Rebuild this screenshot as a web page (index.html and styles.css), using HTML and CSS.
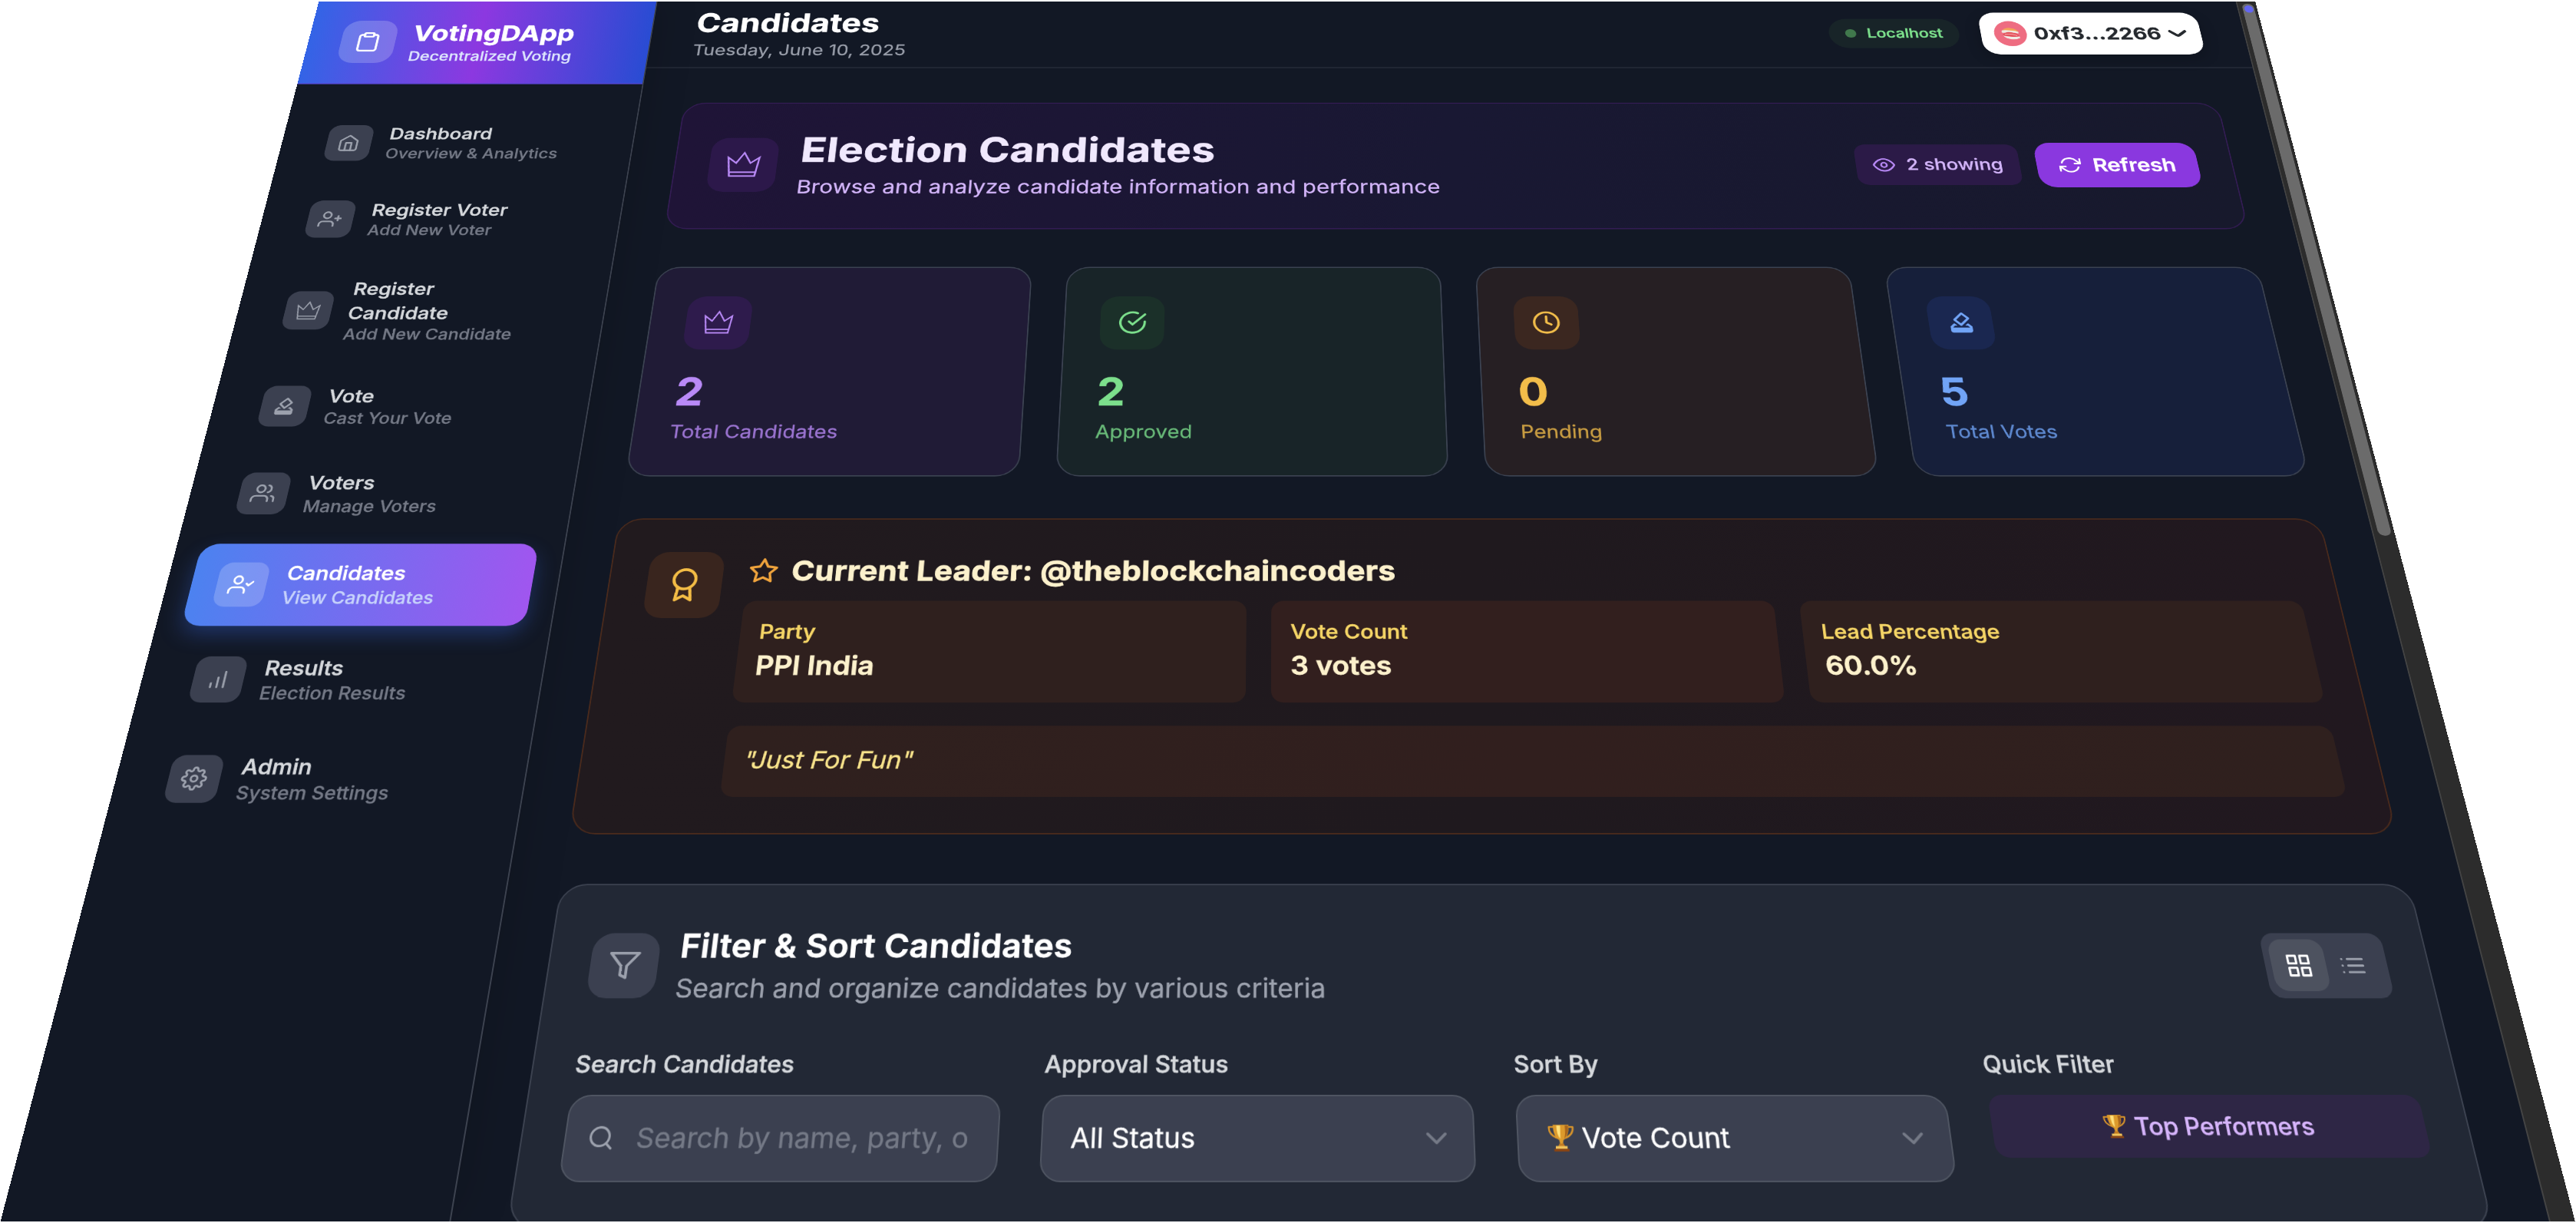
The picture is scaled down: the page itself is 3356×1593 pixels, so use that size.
FILE: index.html
```html
<!DOCTYPE html>
<html lang="en">
<head>
<meta charset="utf-8">
<title>VotingDApp - Candidates</title>
<link rel="stylesheet" href="styles.css">
</head>
<body>
<svg class="sprite" width="0" height="0">
  <symbol id="clipboard" viewBox="0 0 24 24"><path d="M16 4h2a2 2 0 0 1 2 2v14a2 2 0 0 1-2 2H6a2 2 0 0 1-2-2V6a2 2 0 0 1 2-2h2"/><rect x="8" y="2" width="8" height="4" rx="1"/></symbol>
  <symbol id="home" viewBox="0 0 24 24"><path d="M3 9l9-7 9 7v11a2 2 0 0 1-2 2H5a2 2 0 0 1-2-2z"/><path d="M9 22V12h6v10"/></symbol>
  <symbol id="user-plus" viewBox="0 0 24 24"><path d="M16 21v-2a4 4 0 0 0-4-4H5a4 4 0 0 0-4 4v2"/><circle cx="8.5" cy="7" r="4"/><path d="M20 8v6M23 11h-6"/></symbol>
  <symbol id="crown" viewBox="0 0 24 24"><path d="M.9 5.6L3 22.2h18l2.1-16.6-6 5L12 1.4l-5.1 9.2zM2.7 18.8h18.6"/></symbol>
  <symbol id="vote" viewBox="0 0 24 24"><path fill="currentColor" stroke="none" d="M18 13h-.68l-2 2h1.91L19 17H5l1.78-2h2.05l-2-2H6l-3 3v4c0 1.1.89 2 1.99 2H19c1.1 0 2-.89 2-2v-4l-3-3zm-1-5.05-4.95 4.95-3.54-3.54 4.95-4.95L17 7.95zm-4.24-5.66L6.39 8.66c-.39.39-.39 1.02 0 1.41l4.95 4.95c.39.39 1.02.39 1.41 0l6.36-6.36c.39-.39.39-1.02 0-1.41L14.16 2.3c-.38-.4-1.01-.4-1.4-.01z"/></symbol>
  <symbol id="users" viewBox="0 0 24 24"><path d="M17 21v-2a4 4 0 0 0-4-4H5a4 4 0 0 0-4 4v2"/><circle cx="9" cy="7" r="4"/><path d="M23 21v-2a4 4 0 0 0-3-3.87M16 3.13a4 4 0 0 1 0 7.75"/></symbol>
  <symbol id="user-check" viewBox="0 0 24 24"><path d="M16 21v-2a4 4 0 0 0-4-4H5a4 4 0 0 0-4 4v2"/><circle cx="8.5" cy="7" r="4"/><path d="M17 11l2 2 4-4"/></symbol>
  <symbol id="bars" viewBox="0 0 24 24"><path d="M12 20V10M18 20V4M6 20v-4"/></symbol>
  <symbol id="settings" viewBox="0 0 24 24"><circle cx="12" cy="12" r="3"/><path d="M19.4 15a1.65 1.65 0 0 0 .33 1.82l.06.06a2 2 0 0 1 0 2.83 2 2 0 0 1-2.83 0l-.06-.06a1.65 1.65 0 0 0-1.82-.33 1.65 1.65 0 0 0-1 1.51V21a2 2 0 0 1-2 2 2 2 0 0 1-2-2v-.09A1.65 1.65 0 0 0 9 19.4a1.65 1.65 0 0 0-1.82.33l-.06.06a2 2 0 0 1-2.83 0 2 2 0 0 1 0-2.83l.06-.06a1.65 1.65 0 0 0 .33-1.82 1.65 1.65 0 0 0-1.51-1H3a2 2 0 0 1-2-2 2 2 0 0 1 2-2h.09A1.65 1.65 0 0 0 4.6 9a1.65 1.65 0 0 0-.33-1.82l-.06-.06a2 2 0 0 1 0-2.83 2 2 0 0 1 2.83 0l.06.06a1.65 1.65 0 0 0 1.82.33H9a1.65 1.65 0 0 0 1-1.51V3a2 2 0 0 1 2-2 2 2 0 0 1 2 2v.09a1.65 1.65 0 0 0 1 1.51 1.65 1.65 0 0 0 1.82-.33l.06-.06a2 2 0 0 1 2.83 0 2 2 0 0 1 0 2.83l-.06.06a1.65 1.65 0 0 0-.33 1.82V9a1.65 1.65 0 0 0 1.51 1H21a2 2 0 0 1 2 2 2 2 0 0 1-2 2h-.09a1.65 1.65 0 0 0-1.51 1z"/></symbol>
  <symbol id="eye" viewBox="0 0 24 24"><path d="M1 12s4-8 11-8 11 8 11 8-4 8-11 8-11-8-11-8z"/><circle cx="12" cy="12" r="3"/></symbol>
  <symbol id="refresh" viewBox="0 0 24 24"><path d="M23 4v6h-6M1 20v-6h6"/><path d="M3.51 9a9 9 0 0 1 14.85-3.36L23 10M1 14l4.64 4.36A9 9 0 0 0 20.49 15"/></symbol>
  <symbol id="check-circle" viewBox="0 0 24 24"><path d="M22 11.08V12a10 10 0 1 1-5.93-9.14"/><path d="M22 4L12 14.01l-3-3"/></symbol>
  <symbol id="clock" viewBox="0 0 24 24"><circle cx="12" cy="12" r="10"/><path d="M12 6v6l4 2"/></symbol>
  <symbol id="award" viewBox="0 0 24 24"><circle cx="12" cy="8" r="7"/><path d="M8.21 13.89L7 23l5-3 5 3-1.21-9.12"/></symbol>
  <symbol id="star" viewBox="0 0 24 24"><path d="M12 2l3.09 6.26L22 9.27l-5 4.87 1.18 6.88L12 17.77l-6.18 3.25L7 14.14 2 9.27l6.91-1.01z"/></symbol>
  <symbol id="filter" viewBox="0 0 24 24"><path d="M22 3H2l8 9.46V19l4 2v-8.54z"/></symbol>
  <symbol id="grid" viewBox="0 0 24 24"><path d="M3 3h7v7H3zM14 3h7v7h-7zM14 14h7v7h-7zM3 14h7v7H3z"/></symbol>
  <symbol id="list" viewBox="0 0 24 24"><path d="M8 6h13M8 12h13M8 18h13M3 6h.01M3 12h.01M3 18h.01"/></symbol>
  <symbol id="search" viewBox="0 0 24 24"><circle cx="11" cy="11" r="8"/><path d="M21 21l-4.35-4.35"/></symbol>
  <symbol id="chevron" viewBox="0 0 24 24"><path d="M6 9l6 6 6-6"/></symbol>
  <symbol id="wallet-chevron" viewBox="0 0 14 7"><path d="M1.5 1.2l4.4 3.6q1.1.9 2.2 0l4.4-3.6" stroke-width="2.3"/></symbol>
  <symbol id="sushi" viewBox="0 0 24 24"><g stroke="none"><circle cx="12" cy="12" r="12" fill="#ee6c81"/><path d="M6.200 8.800q4.800-1 9.500.3l2.500 1.400-.4 1.400q-5-1.400-11.600-.6-.8-1.200 0-2.500z" fill="#efe9e0"/><path d="M6.500 8.800Q8 6.400 11.500 6.500q4.500.2 6.700 3.500-5.500-1.600-11.700-1.200z" fill="#f3a257"/><path d="M6.300 14q5 1.400 12 .7l.2 1.600q-3 1.500-6.500 1-4-.6-5.700-3.300z" fill="#f1ece6"/><path d="M6 13.300q1.500-2.600 5-2.800 5 .1 7.700 4-3.700.9-7 .3-3.500-.6-5.700-1.500z" fill="#e4525c"/><path d="M8 12.700q4-1 8.500 1.200" stroke="#f6a8ac" stroke-width=".7" fill="none"/></g></symbol>
  <symbol id="trophy" viewBox="0 0 16 16"><g stroke="none"><path d="M3.800 1.800H1.200q-.3 4.700 5 6.400M12.200 1.800h2.600q.3 4.700-5 6.400" fill="none" stroke="#d9952b" stroke-width="1"/><path d="M3.500.5h9q.1 6.700-3.300 8.800L8.700 12H7.300l-.5-2.700Q3.400 7.200 3.500.5z" fill="#dc9a2c"/><path d="M5.500 1h2.200l-.2 7.600Q5.500 6.600 5.500 1z" fill="#ffe07a"/><path d="M10.300 1h2q0 5-2.600 7.600 1-3 .6-7.600z" fill="#a9651a"/><path d="M6.800 11.300h2.400l.8 1.700H6z" fill="#c07a22"/><path d="M4.700 12.700h6.600v1.700H4.700z" fill="#efc25a"/><path d="M3.700 14.300h8.600v1.500H3.700z" fill="#8b4513"/></g></symbol>
</svg>

<div class="viewport">
<div class="stage">
<div class="screen">
  <aside class="sidebar">
    <div class="brand">
      <span class="brand-icon"><svg><use href="#clipboard"/></svg></span>
      <div><div class="brand-name">VotingDApp</div><div class="brand-sub">Decentralized Voting</div></div>
    </div>
    <nav class="nav">
      <a class="item"><span class="chip"><svg><use href="#home"/></svg></span><span class="item-text"><b>Dashboard</b><small>Overview &amp; Analytics</small></span></a>
      <a class="item"><span class="chip"><svg><use href="#user-plus"/></svg></span><span class="item-text"><b>Register Voter</b><small>Add New Voter</small></span></a>
      <a class="item"><span class="chip"><svg class="thin"><use href="#crown"/></svg></span><span class="item-text"><b>Register<br>Candidate</b><small>Add New Candidate</small></span></a>
      <a class="item"><span class="chip"><svg><use href="#vote"/></svg></span><span class="item-text"><b>Vote</b><small>Cast Your Vote</small></span></a>
      <a class="item"><span class="chip"><svg><use href="#users"/></svg></span><span class="item-text"><b>Voters</b><small>Manage Voters</small></span></a>
      <a class="item active"><span class="chip"><svg><use href="#user-check"/></svg></span><span class="item-text"><b>Candidates</b><small>View Candidates</small></span></a>
      <a class="item"><span class="chip"><svg><use href="#bars"/></svg></span><span class="item-text"><b>Results</b><small>Election Results</small></span></a>
      <a class="item"><span class="chip"><svg><use href="#settings"/></svg></span><span class="item-text"><b>Admin</b><small>System Settings</small></span></a>
    </nav>
  </aside>

  <div class="main">
    <header class="topbar">
      <div><h1>Candidates</h1><p>Tuesday, June 10, 2025</p></div>
      <div class="topbar-right">
        <span class="network"><i></i>Localhost</span>
        <span class="wallet"><svg class="avatar"><use href="#sushi"/></svg><span>0xf3...2266</span><svg class="caret"><use href="#wallet-chevron"/></svg></span>
      </div>
    </header>

    <main class="content">
      <section class="banner">
        <span class="banner-icon"><svg class="thin"><use href="#crown"/></svg></span>
        <div class="banner-text"><h2>Election Candidates</h2><p>Browse and analyze candidate information and performance</p></div>
        <span class="showing"><svg><use href="#eye"/></svg>2 showing</span>
        <button class="refresh"><svg><use href="#refresh"/></svg>Refresh</button>
      </section>

      <section class="stats">
        <div class="stat purple"><span class="stat-icon"><svg class="thin"><use href="#crown"/></svg></span><strong>2</strong><em>Total Candidates</em></div>
        <div class="stat green"><span class="stat-icon"><svg><use href="#check-circle"/></svg></span><strong>2</strong><em>Approved</em></div>
        <div class="stat amber"><span class="stat-icon"><svg><use href="#clock"/></svg></span><strong>0</strong><em>Pending</em></div>
        <div class="stat blue"><span class="stat-icon"><svg><use href="#vote"/></svg></span><strong>5</strong><em>Total Votes</em></div>
      </section>

      <section class="leader">
        <span class="leader-icon"><svg><use href="#award"/></svg></span>
        <div class="leader-body">
          <h3><svg><use href="#star"/></svg>Current Leader: @theblockchaincoders</h3>
          <div class="facts">
            <div class="fact"><span>Party</span><b>PPI India</b></div>
            <div class="fact mid"><span>Vote Count</span><b>3 votes</b></div>
            <div class="fact"><span>Lead Percentage</span><b>60.0%</b></div>
          </div>
          <p class="slogan">"Just For Fun"</p>
        </div>
      </section>

      <section class="filters">
        <div class="filters-head">
          <span class="filters-icon"><svg><use href="#filter"/></svg></span>
          <div class="filters-text"><h3>Filter &amp; Sort Candidates</h3><p>Search and organize candidates by various criteria</p></div>
          <div class="toggle"><span class="on"><svg><use href="#grid"/></svg></span><span><svg><use href="#list"/></svg></span></div>
        </div>
        <div class="fields">
          <div class="field"><label>Search Candidates</label><div class="control search"><svg><use href="#search"/></svg><span>Search by name, party, o</span></div></div>
          <div class="field"><label>Approval Status</label><div class="control"><span>All Status</span><svg><use href="#chevron"/></svg></div></div>
          <div class="field"><label>Sort By</label><div class="control"><svg class="trophy"><use href="#trophy"/></svg><span>Vote Count</span><svg><use href="#chevron"/></svg></div></div>
          <div class="field"><label>Quick Filter</label><button class="quick"><svg><use href="#trophy"/></svg>Top Performers</button></div>
        </div>
      </section>
    </main>
  </div>
  <div class="scrollbar"><div class="thumb"><i></i></div></div>
</div>
</div>
</div>
</body>
</html>
```
FILE: styles.css
```css
* { box-sizing: border-box; margin: 0; padding: 0; }
html, body { width: 3356px; height: 1593px; overflow: hidden; background: #fff; }
body { font-family: Inter, "Liberation Sans", sans-serif; }
.sprite { position: absolute; }
.viewport { width: 3356px; height: 1593px; overflow: hidden; }

/* The screen is laid out flat at 1440px, then tilted away at the top. */
.stage {
  width: 3356px; height: 2081.2px; overflow: hidden;
  transform-origin: 0 0;
  transform: matrix3d(.75164, 0, 0, 0, -.199462, .57431, 0, -.000119177, 0, 0, 1, 0, 415.5, 1.5, 0, 1);
}
.screen {
  zoom: 2.33056; width: 1440px; height: 893px; overflow: hidden;
  display: flex; background: #121825; color: #fff; font-size: 16px; line-height: 24px;
  -webkit-text-stroke: .15px currentColor;
}
svg { display: block; flex: none; fill: none; stroke: currentColor; stroke-width: 2; stroke-linecap: round; stroke-linejoin: round; }
svg.thin { stroke-width: 1.3; stroke-linejoin: miter; }
p, h1, h2, h3 { white-space: nowrap; }
h1, h2, h3, .brand-name { letter-spacing: .007em; -webkit-text-stroke-width: .35px; }

.sidebar { width: 251.700px; flex: none; border-right: 1px solid #3d4350; background: #121825; box-shadow: 0 0 30px rgba(0, 0, 0, .18); position: relative; z-index: 1; }
.brand { height: 79px; padding: 0 24px; display: flex; align-items: center; gap: 12px; background: linear-gradient(to right, #3364e6, #8c38e0 50%, #294cd3); border-bottom: 1px solid rgba(90, 70, 210, .8); }
.brand-icon { width: 40px; height: 40px; border-radius: 12px; background: rgba(255, 255, 255, .2); display: grid; place-items: center; }
.brand-icon svg { width: 20px; height: 20px; }
.brand-name { font-weight: 700; font-size: 20px; line-height: 28px; }
.brand-sub { font-size: 12px; line-height: 16px; color: #dde5fd; font-weight: 500; }

.nav { padding: 24px 16px; display: flex; flex-direction: column; gap: 8px; }
.item { min-height: 59.500px; padding: 11.700px 16px; display: flex; align-items: center; gap: 12px; border-radius: 12px; }
.chip { width: 32px; height: 32px; border-radius: 8px; background: #3b4050; color: #9ca1ad; display: grid; place-items: center; }
.chip svg { width: 16px; height: 16px; }
.item-text b { display: block; font-size: 14px; line-height: 20px; font-weight: 500; color: #d5d8dc; letter-spacing: .004em; -webkit-text-stroke-width: .3px; }
.item-text small { display: block; font-size: 12px; line-height: 16px; color: #747986; white-space: nowrap; font-weight: 500; letter-spacing: .004em; }
.active { background: linear-gradient(to right, #4c82f0, #a056ef); box-shadow: 0 6px 14px rgba(59, 110, 240, .32); }
.active .chip { background: rgba(255, 255, 255, .2); color: #fff; }
.active b { color: #fff; }
.active small { color: #c6d2fb; }

.main { flex: 1; min-width: 0; }
.topbar { height: 64px; padding: 5px 32px 0; display: flex; justify-content: space-between; border-bottom: 1px solid #272d3a; }
.topbar h1 { font-size: 24px; line-height: 32px; font-weight: 700; }
.topbar p { font-size: 14px; line-height: 20px; color: #999eaa; }
.topbar-right { display: flex; align-items: center; gap: 16px; height: 52.500px; }
.network { height: 28px; padding: 0 12px; border-radius: 14px; background: #182428; color: #7cdf8c; font-size: 12px; font-weight: 500; display: flex; align-items: center; gap: 8px; -webkit-text-stroke-width: .3px; }
.network i { width: 8px; height: 8px; border-radius: 50%; background: #40784c; }
.wallet { width: 162px; height: 40px; padding: 0 10px; border-radius: 12px; background: #fff; color: #25292e; font-weight: 700; display: flex; align-items: center; justify-content: space-between; box-shadow: 0 4px 12px rgba(0, 0, 0, .2); }
.avatar { width: 24px; height: 24px; }
.caret { width: 14px; height: 7px; }

.content { padding: 32px; display: flex; flex-direction: column; gap: 32px; }
.banner { height: 113px; padding: 0 24px; border: 1px solid #341c55; border-radius: 16px; background: linear-gradient(to right, #1f1437, #191833 50%, #17192c); display: flex; align-items: center; }
.banner-icon { width: 48px; height: 48px; border-radius: 12px; background: #2c184a; color: #b98af7; display: grid; place-items: center; margin-right: 16px; }
.banner-icon svg { width: 24px; height: 24px; }
.banner-text { flex: 1; }
.banner h2 { font-size: 30px; line-height: 36px; margin-bottom: 3px; font-weight: 700; color: #f0e8fd; }
.banner p { color: #d3b5fa; }
.showing { height: 36px; padding: 0 12px; border-radius: 8px; background: #2b1a47; color: #d3b5fa; font-size: 14px; font-weight: 500; display: flex; align-items: center; gap: 8px; margin-right: 12px; }
.showing svg, .refresh svg { width: 16px; height: 16px; }
.showing svg { color: #b98af7; }
button { border: 0; font-family: inherit; }
.refresh { height: 40px; padding: 0 16px; border-radius: 12px; background: #8a38df; color: #fff; font-size: 16px; font-weight: 600; letter-spacing: -.01em; display: flex; align-items: center; gap: 8px; }

.stats { display: grid; grid-template-columns: repeat(4, 1fr); gap: 24px; }
.stat { height: 169px; padding: 24px; border: 1px solid #3c4352; border-radius: 16px; }
.stat-icon { width: 44px; height: 44px; border-radius: 12px; display: grid; place-items: center; margin-bottom: 16px; }
.stat-icon svg { width: 20px; height: 20px; }
.stat strong { display: block; font-size: 30px; line-height: 36px; font-weight: 700; margin-bottom: 3.500px; -webkit-text-stroke-width: .35px; }
.stat em { display: block; font-style: normal; font-size: 14px; line-height: 20px; opacity: .8; letter-spacing: .005em; }
.purple { background: #201b36; color: #b98af7; } .purple .stat-icon { background: #2e1b4c; }
.green { background: #182428; color: #7cdf8c; } .green .stat-icon { background: #1b3029; }
.amber { background: #261f23; color: #f2bd4a; } .amber .stat-icon { background: #3b2720; }
.blue { background: #161f3a; color: #71a4f6; } .blue .stat-icon { background: #1a2750; }

.leader { height: 219.800px; margin-top: -.300px; padding: 24px; border: 1px solid #4a2a1c; border-radius: 16px; background: linear-gradient(to right, #211a1e, #1f191e 50%, #21181f); display: flex; gap: 16px; }
.leader-icon { width: 48px; height: 48px; flex: none; border-radius: 12px; background: #39251e; color: #f3bc45; display: grid; place-items: center; }
.leader-icon svg { width: 24px; height: 24px; }
.leader-body { flex: 1; margin-top: -.200px; }
.leader h3 { font-size: 20px; line-height: 28px; font-weight: 700; color: #fcf1cc; display: flex; align-items: center; gap: 8px; margin-bottom: 7.800px; letter-spacing: .005em; }
.leader h3 svg { width: 20px; height: 20px; color: #efa33c; }
.facts { display: grid; grid-template-columns: repeat(3, 1fr); gap: 16px; margin-bottom: 16px; }
.fact { padding: 11.700px 12px; height: 71.500px; border-radius: 8px; background: #2f201e; }
.fact.mid { background: #321f1e; }
.fact span { display: block; font-size: 14px; line-height: 20px; font-weight: 500; color: #f5d566; -webkit-text-stroke-width: .25px; }
.fact b { display: block; font-size: 18px; line-height: 28px; font-weight: 600; color: #fcf1cc; -webkit-text-stroke-width: .35px; }
.slogan { height: 47.500px; padding: 12px; border-radius: 8px; background: linear-gradient(to right, #2f201e, #311f1e 50%, #2f201e); color: #f8e38b; font-style: italic; line-height: 22.500px; letter-spacing: -.005em; }

.filters { height: 203.500px; padding: 24px; border: 1px solid #3c4250; border-radius: 16px; background: #222835; }
.filters-head { display: flex; align-items: center; margin-bottom: 23.200px; margin-top: -.200px; }
.filters-icon { width: 40px; height: 40px; border-radius: 12px; background: #3b4050; color: #9ca1ad; display: grid; place-items: center; margin-right: 12px; }
.filters-icon svg { width: 20px; height: 20px; }
.filters-text { flex: 1; }
.filters h3 { font-size: 20px; line-height: 28px; font-weight: 600; letter-spacing: .009em; }
.filters p { color: #9ca1ad; letter-spacing: -.002em; }
.toggle { width: 72px; height: 40px; padding: 4px; border-radius: 8px; background: #3b4050; display: flex; }
.toggle span { width: 32px; height: 32px; border-radius: 8px; display: grid; place-items: center; color: #9ca1ad; }
.toggle .on { background: #4d525f; color: #fff; }
.toggle svg { width: 16px; height: 16px; }
.fields { display: grid; grid-template-columns: repeat(4, minmax(0, 1fr)); gap: 24px; }
.field label { display: block; font-size: 14px; line-height: 20px; font-weight: 500; color: #d5d8dc; margin-bottom: 8px; -webkit-text-stroke-width: .25px; }
.control { height: 49.700px; padding: 0 11px 0 16px; border: 1px solid #4f5562; border-radius: 12px; background: #3b4050; display: flex; align-items: center; }
.control span { flex: 1; white-space: nowrap; }
.control svg { width: 20px; height: 20px; color: #747986; }
.search { padding: 0 14px 0 12px; gap: 12px; }
.search svg { width: 16px; height: 16px; color: #9ca1ad; }
.search span { color: #747986; overflow: hidden; }
.control .trophy { width: 16px; height: 16px; margin-right: 4px; }
.quick { width: 100%; height: 35.800px; border-radius: 8px; background: #2e2645; color: #d6b4fb; font-size: 14px; font-weight: 500; letter-spacing: -.01em; display: flex; align-items: center; justify-content: center; gap: 4px; }
.quick svg { width: 14px; height: 14px; }

.scrollbar { width: 14.500px; flex: none; background: #2c2c2c; border-left: 1px solid #444; padding: 2.500px 2px 0 3px; }
.thumb { height: 452px; border-radius: 4px; background: #6b6b6b; padding: 2px 1px 0; }
.thumb i { display: block; height: 6.500px; border-radius: 3px; background: #6366f1; }
```
